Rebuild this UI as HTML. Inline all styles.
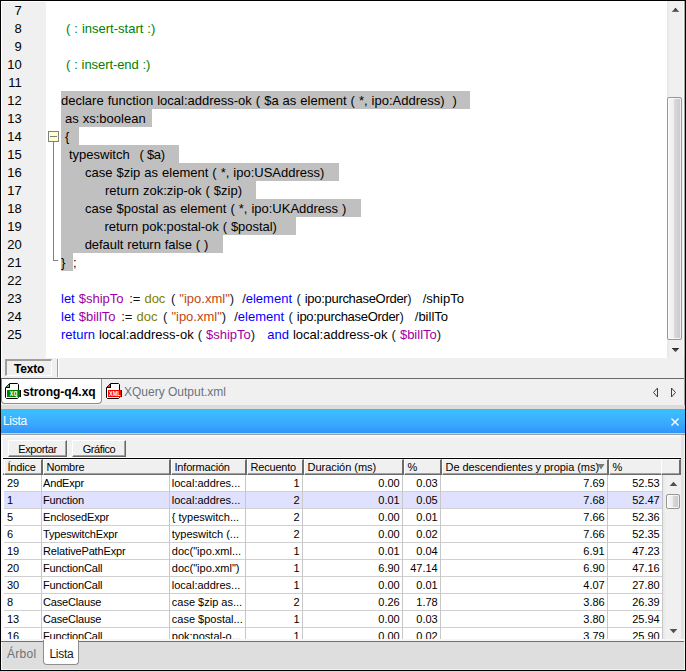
<!DOCTYPE html>
<html lang="es">
<head>
<meta charset="utf-8">
<title>XQuery Profiler</title>
<style>
*{box-sizing:border-box;margin:0;padding:0}
html,body{width:686px;height:671px;overflow:hidden;background:#f0f0f0}
body{position:relative;font-family:"Liberation Sans",sans-serif;color:#000}
.abs{position:absolute}
/* editor */
#gutter{left:2px;top:2px;width:44px;height:356px;background:#f0f0f0}
#edit{left:46px;top:2px;width:621px;height:356px;background:#fff}
.ln{position:absolute;left:0;width:19.8px;text-align:right;font-size:13px;line-height:18px;height:18px}
.cl{position:absolute;left:61px;height:18px;line-height:20px;font-size:13px;white-space:pre;word-spacing:.39px}
.sel{background:#c0c0c0}
.k{color:#0000ff}.v{color:#a000a0}.f{color:#808000}.p{color:#0a1a2a}.s{color:#c04810}.c{color:#008000}.o{color:#101010}
/* scrollbars */
.trk{background:linear-gradient(90deg,#e6e6e6 0,#f0f0f0 3px,#f0f0f0 100%)}
.thumb{border:1px solid #979797;border-radius:2px;background:linear-gradient(90deg,#f6f6f6 0,#efefef 45%,#d9d9db 50%,#c9c9cd 100%);box-shadow:inset 0 0 0 1px rgba(255,255,255,.7)}
/* table */
#grid{left:4px;top:459px;width:659px;height:180px;background:#fff;overflow:hidden;font-size:11px}
.hd{position:absolute;top:0;height:16px;padding-top:1px;letter-spacing:-.2px;background:#f0f0f0;border-left:1px solid #fff;border-top:1px solid #f8f8f8;border-right:2px solid #6c6c6c;border-bottom:1px solid #6c6c6c;box-shadow:inset 0 -1px 0 #a0a0a0;line-height:12px;padding-left:2.5px;white-space:nowrap;overflow:hidden;font-size:11px}
.hd.last{border-right:1px solid #fff}
.row{position:absolute;left:0;width:659px;height:17px;border-bottom:1px solid #d0d0d0}
.row.hl{background:#e0e0ff}
.c_{position:absolute;top:0;height:16px;line-height:16px;white-space:nowrap;overflow:hidden;font-size:11px}
.vl{position:absolute;top:16px;width:1px;height:170px;background:#c8c8c8}
.btn{position:absolute;top:440px;height:17px;background:#f0f0f0;border-left:1px solid #fff;border-top:1px solid #fff;border-right:1px solid #696969;border-bottom:1px solid #696969;box-shadow:inset -1px -1px 0 #a0a0a0;font-size:11px;line-height:14px;padding-top:1px;text-align:center;letter-spacing:-.4px}
</style>
</head>
<body>
<!-- ===== editor ===== -->
<div class="abs" style="left:1px;top:1px;width:684px;height:1px;background:#fff"></div>
<div class="abs" style="left:1px;top:1px;width:1px;height:668px;background:#fff"></div>
<div id="gutter" class="abs">
<div class="ln" style="top:0">7</div><div class="ln" style="top:18px">8</div><div class="ln" style="top:36px">9</div>
<div class="ln" style="top:54px">10</div><div class="ln" style="top:72px">11</div><div class="ln" style="top:90px">12</div>
<div class="ln" style="top:108px">13</div><div class="ln" style="top:126px">14</div><div class="ln" style="top:144px">15</div>
<div class="ln" style="top:162px">16</div><div class="ln" style="top:180px">17</div><div class="ln" style="top:198px">18</div>
<div class="ln" style="top:216px">19</div><div class="ln" style="top:234px">20</div><div class="ln" style="top:252px">21</div>
<div class="ln" style="top:270px">22</div><div class="ln" style="top:288px">23</div><div class="ln" style="top:306px">24</div>
<div class="ln" style="top:324px">25</div>
</div>
<div id="edit" class="abs"></div>
<!-- code lines (absolute to body) -->
<div class="cl c" style="top:19px;left:66px">( : insert-start :)</div>
<div class="cl c" style="top:55px;left:66px;letter-spacing:-.08px">( : insert-end :)</div>
<div class="cl sel" style="top:91px;width:409px">declare function local:address-ok ( $a as element ( *, ipo:Address)  )</div>
<div class="cl sel" style="top:109px;width:91px"> as xs:boolean</div>
<div class="cl sel" style="top:127px;width:18px"> {</div>
<div class="cl sel" style="top:145px;width:118px">  typeswitch  <span style="margin-left:1.8px;letter-spacing:-.4px">( $a)</span></div>
<div class="cl sel" style="top:163px;width:278px">      case $zip as element ( *, ipo:USAddress)</div>
<div class="cl sel" style="top:181px;width:194.5px">           return zok:zip-ok ( $zip)</div>
<div class="cl sel" style="top:199px;width:300px">      case $postal as element ( *, ipo:UKAddress )</div>
<div class="cl sel" style="top:217px;width:235px;letter-spacing:-.05px">           return pok:postal-ok ( $postal)</div>
<div class="cl sel" style="top:235px;width:162px;letter-spacing:-.06px">      default return false ( )</div>
<div class="cl" style="top:253px"><span class="sel" style="display:inline-block;width:12px;height:18px;vertical-align:top">}  </span>;</div>
<div class="cl" style="top:289px"><span class="k">let</span> <span class="v">$shipTo</span> <span class="o" style="margin-left:1.6px">:=</span> <span class="f">doc</span> <span class="p" style="margin-left:1.6px">(</span> <span class="s">"ipo.xml"</span><span class="p">)</span>  <span class="o">/</span><span class="k">element</span> <span class="p" style="margin-left:.4px">(</span> <span style="letter-spacing:-.3px">ipo:purchaseOrder</span><span class="p">)</span>  <span class="o" style="margin-left:3px">/</span>shipTo</div>
<div class="cl" style="top:307px"><span class="k">let</span> <span class="v">$billTo</span> <span class="o" style="margin-left:1.6px">:=</span> <span class="f">doc</span> <span class="p" style="margin-left:1.6px">(</span> <span class="s">"ipo.xml"</span><span class="p">)</span>  <span class="o">/</span><span class="k">element</span> <span class="p" style="margin-left:.4px">(</span> <span style="letter-spacing:-.3px">ipo:purchaseOrder</span><span class="p">)</span>  <span class="o" style="margin-left:3px">/</span>billTo</div>
<div class="cl" style="top:325px"><span class="k">return</span> local:address-ok <span class="p">(</span> <span class="v">$shipTo</span><span class="p">)</span>   <span class="k">and</span> local:address-ok <span class="p">(</span> <span class="v">$billTo</span><span class="p">)</span></div>
<!-- fold marker -->
<div class="abs" style="left:48px;top:131px;width:11px;height:11px;border:1px solid #808080;background:#ffffcc"></div>
<div class="abs" style="left:50px;top:136px;width:7px;height:1px;background:#808080"></div>
<div class="abs" style="left:53px;top:142px;width:1px;height:119px;background:#808080"></div>
<div class="abs" style="left:53px;top:260px;width:5px;height:1px;background:#808080"></div>
<!-- editor v-scrollbar -->
<div class="abs trk" style="left:667px;top:1px;width:16px;height:357px"></div>
<div class="abs" style="left:683px;top:2px;width:1px;height:356px;background:#fafafa"></div>
<div class="abs" style="left:684px;top:1px;width:1px;height:668px;background:#a0a0a0"></div>
<svg class="abs" style="left:671px;top:7px" width="9" height="6" viewBox="0 0 9 6"><defs><linearGradient id="ga" x1="0" y1="0" x2="0" y2="1"><stop offset="0" stop-color="#202020"/><stop offset="1" stop-color="#707070"/></linearGradient></defs><path d="M4.5 .8 8.3 5 .7 5z" fill="url(#ga)"/></svg>
<svg class="abs" style="left:671px;top:347px" width="9" height="6" viewBox="0 0 9 6"><path d="M.7 1 8.3 1 4.5 5.2z" fill="url(#ga)"/></svg>
<div class="abs thumb" style="left:667px;top:97px;width:15px;height:243px"></div>
<!-- Texto tab strip -->
<div class="abs" style="left:2px;top:358px;width:682px;height:20px;background:#f0f0f0"></div>
<div class="abs" style="left:5px;top:359px;width:47px;height:17px;border-style:solid;border-width:2px 1px 1px 2px;border-color:#a29f9a #fff #fff #a29f9a;background:#f0f0f0"></div>
<div class="abs" style="left:14px;top:362px;font-size:12px;font-weight:bold;line-height:15px;letter-spacing:-.2px">Texto</div>
<div class="abs" style="left:57px;top:359px;width:1px;height:18px;background:#a0a0a0"></div>
<div class="abs" style="left:58px;top:359px;width:1px;height:18px;background:#fff"></div>
<!-- file tab bar -->
<div class="abs" style="left:1px;top:378px;width:683px;height:1px;background:#696969"></div>
<div class="abs" style="left:1px;top:379px;width:683px;height:26px;background:#f0f0f0"></div>
<div class="abs" style="left:1px;top:405px;width:684px;height:3px;background:#dcdcdc"></div>
<div class="abs" style="left:1px;top:408px;width:684px;height:1px;background:#e2dad3"></div>
<div class="abs" style="left:1px;top:379px;width:101px;height:25px;background:#fff;border:1px solid #8e8e8e;border-top:0;border-radius:0 0 4px 4px"></div>
<!-- xq icon -->
<svg class="abs" style="left:4px;top:382px" width="18" height="18" viewBox="0 0 18 18" shape-rendering="crispEdges">
<path d="M5.5 1.5H13.5L14.5 2.5V15.5L13.5 16.5H2.5L1.5 15.5V5.5z" fill="#fff" stroke="#000" stroke-width="1" shape-rendering="geometricPrecision"/>
<path d="M2.3 5 5 2.3V5z" fill="#58b058" shape-rendering="geometricPrecision"/>
<path d="M5.5 2V5.5H2" fill="none" stroke="#000" stroke-width="1"/>
<rect x="3" y="8" width="13" height="7" fill="#008000"/>
<rect x="16" y="8" width="1" height="7" fill="#000"/>
<text x="5.8" y="14" font-family="Liberation Sans,sans-serif" font-size="8.4" font-weight="bold" fill="#fff" textLength="7.6" lengthAdjust="spacingAndGlyphs">xq</text>
</svg>
<div class="abs" style="left:23px;top:384px;font-size:12px;font-weight:bold;line-height:16px">strong-q4.xq</div>
<!-- xml icon -->
<svg class="abs" style="left:105px;top:382px" width="18" height="18" viewBox="0 0 18 18" shape-rendering="crispEdges">
<path d="M5.5 1.5H13.5L14.5 2.5V15.5L13.5 16.5H2.5L1.5 15.5V5.5z" fill="#fff" stroke="#000" stroke-width="1" shape-rendering="geometricPrecision"/>
<path d="M2.3 5 5 2.3V5z" fill="#f04040" shape-rendering="geometricPrecision"/>
<path d="M5.5 2V5.5H2" fill="none" stroke="#000" stroke-width="1"/>
<rect x="3" y="8" width="13" height="7" fill="#ff0000"/>
<rect x="16" y="8" width="1" height="7" fill="#000"/>
<text x="4" y="14" font-family="Liberation Sans,sans-serif" font-size="6.8" font-weight="bold" fill="#fff" textLength="11.6" lengthAdjust="spacingAndGlyphs">XML</text>
</svg>
<div class="abs" style="left:124px;top:384px;font-size:12px;line-height:16px;color:#6c7280">XQuery Output.xml</div>
<svg class="abs" style="left:651px;top:386px" width="28" height="13" viewBox="0 0 28 13"><path d="M6.5 2 2.5 6.5 6.5 11z M20.5 2 24.5 6.5 20.5 11z" fill="none" stroke="#404040" stroke-width="1"/></svg>
<!-- Lista header -->
<div class="abs" style="left:1px;top:409px;width:684px;height:24px;background:linear-gradient(180deg,#34c0ff 0,#3cb8ff 25%,#39a8fd 62%,#2f96fb 100%)"></div>
<div class="abs" style="left:3px;top:413px;font-size:12px;line-height:16px;color:#fff;letter-spacing:-.3px">Lista</div>
<svg class="abs" style="left:670px;top:417px" width="10" height="10" viewBox="0 0 10 10"><path d="M1.5 1.5 8.5 8.5M8.5 1.5 1.5 8.5" stroke="#fff" stroke-width="1.4" fill="none"/></svg>
<div class="abs" style="left:1px;top:433px;width:684px;height:1px;background:#d6cfc7"></div>
<div class="abs" style="left:1px;top:434px;width:684px;height:1px;background:#a0a0a0"></div>
<div class="abs" style="left:1px;top:435px;width:684px;height:205px;background:#e3e3e3"></div>
<div class="abs" style="left:1px;top:435px;width:680px;height:205px;background:#fafafa"></div>
<div class="abs" style="left:3px;top:436px;width:678px;height:2px;background:#f4f4f4"></div>
<div class="abs" style="left:3px;top:438px;width:678px;height:202px;background:#f0f0f0"></div>
<!-- buttons -->
<div class="btn" style="left:8px;width:59px">Exportar</div>
<div class="btn" style="left:72px;width:54px">Gráfico</div>
<!-- grid -->
<div class="abs" style="left:3px;top:457px;width:678px;height:1px;background:#fff"></div>
<div class="abs" style="left:3px;top:458px;width:678px;height:1px;background:#000"></div>
<div class="abs" style="left:3px;top:459px;width:1px;height:14px;background:#f0f0f0"></div><div class="abs" style="left:3px;top:473px;width:1px;height:1px;background:#a0a0a0"></div><div class="abs" style="left:3px;top:474px;width:1px;height:1px;background:#6c6c6c"></div><div class="abs" style="left:3px;top:475px;width:1px;height:164px;background:#fff"></div>
<div id="grid" class="abs">
<div class="hd" style="left:0px;width:39px">Índice</div>
<div class="hd" style="left:39px;width:128px">Nombre</div>
<div class="hd" style="left:167px;width:76px">Información</div>
<div class="hd" style="left:243px;width:57px">Recuento</div>
<div class="hd" style="left:300px;width:100px;letter-spacing:-.03px">Duración (ms)</div>
<div class="hd" style="left:400px;width:38px">%</div>
<div class="hd" style="left:438px;width:167px;letter-spacing:-.06px">De descendientes y propia (ms)</div>
<div class="hd last" style="left:605px;width:53px">%</div>
<div class="row" style="top:16px"><span class="c_" style="left:3px;width:34px">29</span><span class="c_" style="letter-spacing:-.16px;left:39px;width:126px">AndExpr</span><span class="c_" style="left:167.8px;width:74px">local:addres...</span><span class="c_" style="left:242px;width:53.7px;text-align:right">1</span><span class="c_" style="left:299px;width:96.7px;text-align:right">0.00</span><span class="c_" style="left:399px;width:34.7px;text-align:right">0.03</span><span class="c_" style="left:437px;width:163.7px;text-align:right">7.69</span><span class="c_" style="left:604px;width:51.7px;text-align:right">52.53</span></div>
<div class="row hl" style="top:33px"><span class="c_" style="left:3px;width:34px">1</span><span class="c_" style="letter-spacing:-.16px;left:39px;width:126px">Function</span><span class="c_" style="left:167.8px;width:74px">local:addres...</span><span class="c_" style="left:242px;width:53.7px;text-align:right">2</span><span class="c_" style="left:299px;width:96.7px;text-align:right">0.01</span><span class="c_" style="left:399px;width:34.7px;text-align:right">0.05</span><span class="c_" style="left:437px;width:163.7px;text-align:right">7.68</span><span class="c_" style="left:604px;width:51.7px;text-align:right">52.47</span></div>
<div class="row" style="top:50px"><span class="c_" style="left:3px;width:34px">5</span><span class="c_" style="letter-spacing:-.16px;left:39px;width:126px">EnclosedExpr</span><span class="c_" style="left:167.8px;width:74px">{ typeswitch...</span><span class="c_" style="left:242px;width:53.7px;text-align:right">2</span><span class="c_" style="left:299px;width:96.7px;text-align:right">0.00</span><span class="c_" style="left:399px;width:34.7px;text-align:right">0.01</span><span class="c_" style="left:437px;width:163.7px;text-align:right">7.66</span><span class="c_" style="left:604px;width:51.7px;text-align:right">52.36</span></div>
<div class="row" style="top:67px"><span class="c_" style="left:3px;width:34px">6</span><span class="c_" style="letter-spacing:-.16px;left:39px;width:126px">TypeswitchExpr</span><span class="c_" style="left:167.8px;width:74px">typeswitch (...</span><span class="c_" style="left:242px;width:53.7px;text-align:right">2</span><span class="c_" style="left:299px;width:96.7px;text-align:right">0.00</span><span class="c_" style="left:399px;width:34.7px;text-align:right">0.02</span><span class="c_" style="left:437px;width:163.7px;text-align:right">7.66</span><span class="c_" style="left:604px;width:51.7px;text-align:right">52.35</span></div>
<div class="row" style="top:84px"><span class="c_" style="left:3px;width:34px">19</span><span class="c_" style="letter-spacing:-.16px;left:39px;width:126px">RelativePathExpr</span><span class="c_" style="left:167.8px;width:74px">doc(&quot;ipo.xml...</span><span class="c_" style="left:242px;width:53.7px;text-align:right">1</span><span class="c_" style="left:299px;width:96.7px;text-align:right">0.01</span><span class="c_" style="left:399px;width:34.7px;text-align:right">0.04</span><span class="c_" style="left:437px;width:163.7px;text-align:right">6.91</span><span class="c_" style="left:604px;width:51.7px;text-align:right">47.23</span></div>
<div class="row" style="top:101px"><span class="c_" style="left:3px;width:34px">20</span><span class="c_" style="letter-spacing:-.16px;left:39px;width:126px">FunctionCall</span><span class="c_" style="left:167.8px;width:74px">doc(&quot;ipo.xml&quot;)</span><span class="c_" style="left:242px;width:53.7px;text-align:right">1</span><span class="c_" style="left:299px;width:96.7px;text-align:right">6.90</span><span class="c_" style="left:399px;width:34.7px;text-align:right">47.14</span><span class="c_" style="left:437px;width:163.7px;text-align:right">6.90</span><span class="c_" style="left:604px;width:51.7px;text-align:right">47.16</span></div>
<div class="row" style="top:118px"><span class="c_" style="left:3px;width:34px">30</span><span class="c_" style="letter-spacing:-.16px;left:39px;width:126px">FunctionCall</span><span class="c_" style="left:167.8px;width:74px">local:addres...</span><span class="c_" style="left:242px;width:53.7px;text-align:right">1</span><span class="c_" style="left:299px;width:96.7px;text-align:right">0.00</span><span class="c_" style="left:399px;width:34.7px;text-align:right">0.01</span><span class="c_" style="left:437px;width:163.7px;text-align:right">4.07</span><span class="c_" style="left:604px;width:51.7px;text-align:right">27.80</span></div>
<div class="row" style="top:135px"><span class="c_" style="left:3px;width:34px">8</span><span class="c_" style="letter-spacing:-.16px;left:39px;width:126px">CaseClause</span><span class="c_" style="left:167.8px;width:74px">case $zip as...</span><span class="c_" style="left:242px;width:53.7px;text-align:right">2</span><span class="c_" style="left:299px;width:96.7px;text-align:right">0.26</span><span class="c_" style="left:399px;width:34.7px;text-align:right">1.78</span><span class="c_" style="left:437px;width:163.7px;text-align:right">3.86</span><span class="c_" style="left:604px;width:51.7px;text-align:right">26.39</span></div>
<div class="row" style="top:152px"><span class="c_" style="left:3px;width:34px">13</span><span class="c_" style="letter-spacing:-.16px;left:39px;width:126px">CaseClause</span><span class="c_" style="left:167.8px;width:74px">case $postal...</span><span class="c_" style="left:242px;width:53.7px;text-align:right">1</span><span class="c_" style="left:299px;width:96.7px;text-align:right">0.00</span><span class="c_" style="left:399px;width:34.7px;text-align:right">0.03</span><span class="c_" style="left:437px;width:163.7px;text-align:right">3.80</span><span class="c_" style="left:604px;width:51.7px;text-align:right">25.94</span></div>
<div class="row" style="top:169px"><span class="c_" style="left:3px;width:34px">16</span><span class="c_" style="letter-spacing:-.16px;left:39px;width:126px">FunctionCall</span><span class="c_" style="left:167.8px;width:74px">pok:postal-o...</span><span class="c_" style="left:242px;width:53.7px;text-align:right">1</span><span class="c_" style="left:299px;width:96.7px;text-align:right">0.00</span><span class="c_" style="left:399px;width:34.7px;text-align:right">0.02</span><span class="c_" style="left:437px;width:163.7px;text-align:right">3.79</span><span class="c_" style="left:604px;width:51.7px;text-align:right">25.90</span></div>
<div class="vl" style="left:37px"></div>
<div class="vl" style="left:165px"></div>
<div class="vl" style="left:241px"></div>
<div class="vl" style="left:298px"></div>
<div class="vl" style="left:398px"></div>
<div class="vl" style="left:436px"></div>
<div class="vl" style="left:603px"></div>
<div class="vl" style="left:658px"></div>
</div>
<!-- header filler + sort arrow -->
<div class="abs" style="left:662px;top:459px;width:19px;height:16px;background:#f0f0f0;border-top:1px solid #f8f8f8;border-right:2px solid #6c6c6c;border-bottom:1px solid #6c6c6c;box-shadow:inset 0 -1px 0 #a0a0a0"></div>
<svg class="abs" style="left:597px;top:464px" width="8" height="6" viewBox="0 0 8 6"><path d="M.5 0H7.5L4 5.5z" fill="#7a7a7a"/></svg>
<!-- list v-scrollbar -->
<div class="abs trk" style="left:663px;top:475px;width:18px;height:164px"></div>
<svg class="abs" style="left:669px;top:481px" width="9" height="6" viewBox="0 0 9 6"><path d="M4.5 .8 8.3 5 .7 5z" fill="#505050"/></svg>
<svg class="abs" style="left:669px;top:628px" width="9" height="6" viewBox="0 0 9 6"><path d="M.7 1 8.3 1 4.5 5.2z" fill="#505050"/></svg>
<div class="abs thumb" style="left:666px;top:494px;width:14px;height:15px"></div>
<!-- bottom tab bar -->
<div class="abs" style="left:2px;top:639px;width:682px;height:2px;background:#f6f6f6"></div>
<div class="abs" style="left:1px;top:641px;width:684px;height:1px;background:#707070"></div>
<div class="abs" style="left:2px;top:642px;width:682px;height:27px;background:#dedede"></div>
<div class="abs" style="left:1px;top:642px;width:1px;height:28px;background:#fafafa"></div>
<div class="abs" style="left:1px;top:669px;width:684px;height:1px;background:#f2f2f2"></div>
<div class="abs" style="left:43px;top:640px;width:36px;height:25px;background:#fff;border:1px solid #8e8e8e;border-top:0;border-radius:0 0 4px 4px"></div>
<div class="abs" style="left:7px;top:646px;font-size:12px;line-height:16px;color:#707070;letter-spacing:.3px">Árbol</div>
<div class="abs" style="left:49.5px;top:646px;font-size:12px;line-height:16px;color:#1a1a1a;letter-spacing:-.3px">Lista</div>
<!-- outer frame -->
<div class="abs" style="left:0;top:0;width:686px;height:1px;background:#000"></div>
<div class="abs" style="left:0;top:0;width:1px;height:671px;background:#000"></div>
<div class="abs" style="left:685px;top:0;width:1px;height:671px;background:#000"></div>
<div class="abs" style="left:684px;top:435px;width:1px;height:235px;background:#f2f2f2"></div>
<div class="abs" style="left:0;top:670px;width:686px;height:1px;background:#000"></div>
</body>
</html>
